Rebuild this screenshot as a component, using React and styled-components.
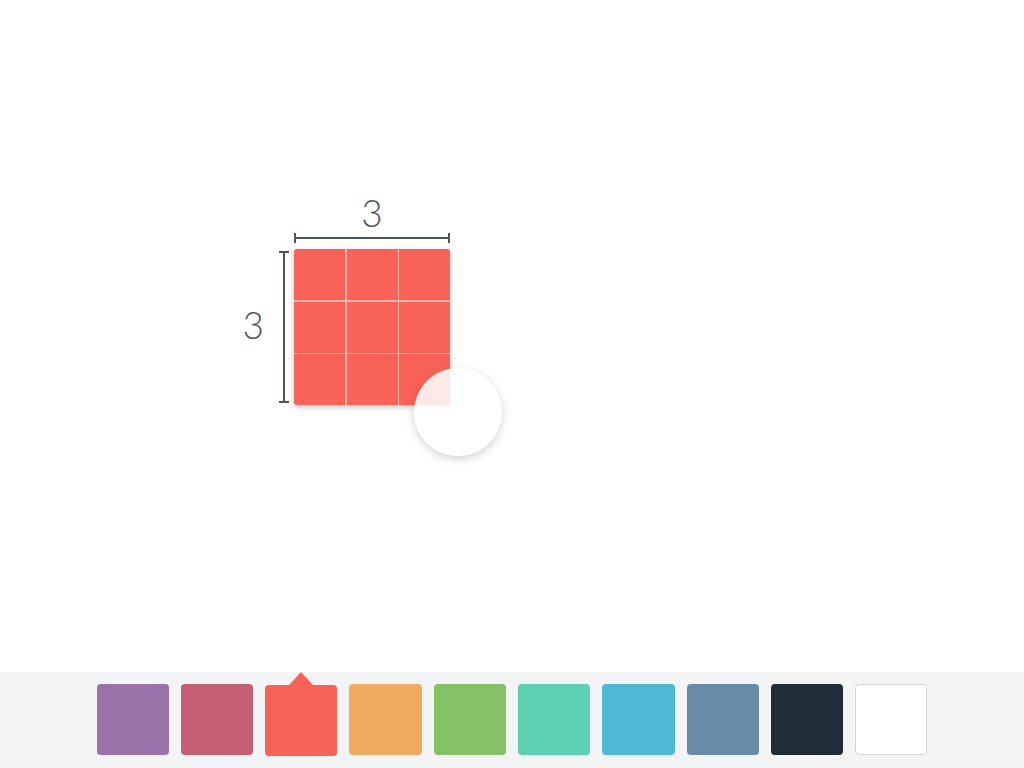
import React, { useState } from 'react'
import styled, { createGlobalStyle } from 'styled-components'

const GlobalStyle = createGlobalStyle`
  html, body {
    margin: 0;
    padding: 0;
    background: #fff;
    font-family: Lato, "Open Sans", sans-serif;
  }
`

const COLORS = [
  { id: 'purple', value: '#9b72aa' },
  { id: 'rose', value: '#c45e72' },
  { id: 'red', value: '#f96357' },
  { id: 'orange', value: '#efab5f' },
  { id: 'green', value: '#84c167' },
  { id: 'teal', value: '#5dd0b2' },
  { id: 'blue', value: '#4fb9d5' },
  { id: 'slate', value: '#6a8ba7' },
  { id: 'dark', value: '#202c36' },
  { id: 'white', value: '#ffffff' }
]

const Page = styled.div`
  width: 1024px;
  height: 768px;
  display: flex;
  flex-direction: column;
  overflow: hidden;
`

const Canvas = styled.div`
  flex: 1;
  position: relative;
`

// the shape sits at its own spot on the free canvas
const Figure = styled.div`
  position: absolute;
  left: 294px;
  top: 249px;
  width: 156px;
  height: 156px;
`

const Grid = styled.div`
  width: 100%;
  height: 100%;
  display: grid;
  grid-template-columns: repeat(${p => p.cols}, 1fr);
  grid-template-rows: repeat(${p => p.rows}, 1fr);
  gap: 1.5px;
  background: #fdb3ab;
  border-radius: 3px;
  overflow: hidden;
  box-shadow: 0 2px 6px rgba(0, 0, 0, 0.22);
`

const Cell = styled.div`
  background: ${p => p.color};
`

const Label = styled.span`
  position: absolute;
  font-family: Lato, "Open Sans", sans-serif;
  font-weight: 300;
  font-size: 37px;
  line-height: 1;
  color: #50555e;
`

const TopRuler = styled.div`
  position: absolute;
  left: 0;
  right: 0;
  top: -12px;
  height: 2px;
  background: #4f545d;

  &::before, &::after {
    content: '';
    position: absolute;
    top: -4px;
    width: 2px;
    height: 10px;
    background: #4f545d;
  }
  &::before { left: 0; }
  &::after { right: 0; }

  ${Label} {
    left: 50%;
    bottom: 8px;
    transform: translateX(-50%);
  }
`

const SideRuler = styled.div`
  position: absolute;
  top: 2px;
  bottom: 2px;
  left: -11px;
  width: 2px;
  background: #4f545d;

  &::before, &::after {
    content: '';
    position: absolute;
    left: -4px;
    width: 10px;
    height: 2px;
    background: #4f545d;
  }
  &::before { top: 0; }
  &::after { bottom: 0; }

  ${Label} {
    top: 50%;
    right: 21px;
    margin-top: -3px;
    transform: translateY(-50%);
  }
`

const Handle = styled.div`
  position: absolute;
  left: 120px;
  top: 119px;
  width: 88px;
  height: 88px;
  border-radius: 50%;
  background: rgba(255, 255, 255, 0.86);
  box-shadow: 0 3px 10px rgba(0, 0, 0, 0.18);
`

const Palette = styled.div`
  height: 96px;
  background: #f3f4f6;
  display: flex;
  justify-content: center;
  align-items: flex-start;
  gap: 12px;
  padding-top: 12px;
  box-sizing: border-box;
`

const Swatch = styled.button`
  position: relative;
  width: 72.3px;
  height: 71px;
  padding: 0;
  border-radius: 4px;
  border: ${p => (p.color === '#ffffff' ? '1px solid #d4d4d8' : 'none')};
  background: ${p => p.color};
  margin-top: ${p => (p.active ? '1px' : '0')};
  cursor: pointer;
  box-sizing: border-box;

  &::before {
    content: '';
    display: ${p => (p.active ? 'block' : 'none')};
    position: absolute;
    left: 50%;
    top: -13px;
    transform: translateX(-50%);
    border-left: 12px solid transparent;
    border-right: 12px solid transparent;
    border-bottom: 13px solid ${p => p.color};
  }
`

export default function App () {
  const [color, setColor] = useState('#f96357')
  const rows = 3
  const cols = 3
  const cells = Array.from({ length: rows * cols })

  return (
    <Page>
      <GlobalStyle />
      <Canvas>
        <Figure>
          <TopRuler><Label>{cols}</Label></TopRuler>
          <SideRuler><Label>{rows}</Label></SideRuler>
          <Grid rows={rows} cols={cols}>
            {cells.map((_, i) => <Cell key={i} color={color} />)}
          </Grid>
          <Handle />
        </Figure>
      </Canvas>
      <Palette>
        {COLORS.map(c => (
          <Swatch
            key={c.id}
            color={c.value}
            active={c.value === color}
            onClick={() => setColor(c.value)} />
        ))}
      </Palette>
    </Page>
  )
}
